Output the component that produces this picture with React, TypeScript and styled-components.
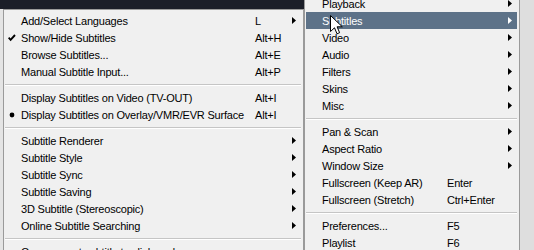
import React from "react";
import styled, { createGlobalStyle } from "styled-components";

const GlobalStyle = createGlobalStyle`
  html, body {
    margin: 0;
    padding: 0;
    background: #dcdcdc;
  }
`;

type Entry =
	| { sep: true }
	| {
			sep?: false;
			label: string;
			shortcut?: string;
			sub?: boolean;
			mark?: "check" | "bullet";
			active?: boolean;
	  };

const subtitleItems: Entry[] = [
	{ label: "Add/Select Languages", shortcut: "L", sub: true },
	{ label: "Show/Hide Subtitles", shortcut: "Alt+H", mark: "check" },
	{ label: "Browse Subtitles...", shortcut: "Alt+E" },
	{ label: "Manual Subtitle Input...", shortcut: "Alt+P" },
	{ sep: true },
	{ label: "Display Subtitles on Video (TV-OUT)", shortcut: "Alt+I" },
	{ label: "Display Subtitles on Overlay/VMR/EVR Surface", shortcut: "Alt+I", mark: "bullet" },
	{ sep: true },
	{ label: "Subtitle Renderer", sub: true },
	{ label: "Subtitle Style", sub: true },
	{ label: "Subtitle Sync", sub: true },
	{ label: "Subtitle Saving", sub: true },
	{ label: "3D Subtitle (Stereoscopic)", sub: true },
	{ label: "Online Subtitle Searching", sub: true },
	{ sep: true },
	{ label: "Copy current subtitle to clipboard" },
];

const mainItems: Entry[] = [
	{ label: "Playback", sub: true },
	{ label: "Subtitles", sub: true, active: true },
	{ label: "Video", sub: true },
	{ label: "Audio", sub: true },
	{ label: "Filters", sub: true },
	{ label: "Skins", sub: true },
	{ label: "Misc", sub: true },
	{ sep: true },
	{ label: "Pan & Scan", sub: true },
	{ label: "Aspect Ratio", sub: true },
	{ label: "Window Size", sub: true },
	{ label: "Fullscreen (Keep AR)", shortcut: "Enter" },
	{ label: "Fullscreen (Stretch)", shortcut: "Ctrl+Enter" },
	{ sep: true },
	{ label: "Preferences...", shortcut: "F5" },
	{ label: "Playlist", shortcut: "F6" },
];

const Screen = styled.div`
  position: relative;
  width: 534px;
  height: 250px;
  overflow: hidden;
  display: flex;
  align-items: flex-start;
  background: #dcdcdc;
  font-family: "Liberation Sans", Arial, sans-serif;
  font-size: 11px;
  letter-spacing: -0.2px;
`;

const LeftColumn = styled.div`
  width: 304px;
  flex-shrink: 0;
  display: flex;
  flex-direction: column;
`;

const TitleStrip = styled.div`
  height: 9px;
  background: #1b1e28;
`;

const SubArea = styled.div`
  display: flex;
  padding-left: 3px;
  background: #e4e4e4;
`;

const Backdrop = styled.div`
  flex: 1;
  align-self: stretch;
  background: #dedede;
`;

const MenuBox = styled.div<{ $width: number; $lift: number }>`
  width: ${({ $width }) => $width}px;
  margin-top: ${({ $lift }) => -$lift}px;
  box-sizing: border-box;
  flex-shrink: 0;
  background: #f0f0f0;
  border: 1px solid #9a9a9a;
  padding: 2px 2px 3px 1px;
  display: flex;
  flex-direction: column;
  box-shadow: 2px 2px 2px rgba(0, 0, 0, 0.22);
`;

const Row = styled.div<{ $active?: boolean }>`
  height: 17px;
  display: flex;
  align-items: center;
  color: ${({ $active }) => ($active ? "#ffffff" : "#000000")};
  background: ${({ $active }) => ($active ? "#5d7288" : "transparent")};
  white-space: nowrap;
`;

const MarkCol = styled.div`
  width: 16px;
  flex-shrink: 0;
  display: flex;
  align-items: center;
  padding-left: 3px;
  box-sizing: border-box;
`;

const Label = styled.span<{ $width: number }>`
  width: ${({ $width }) => $width}px;
  flex-shrink: 0;
`;

const Shortcut = styled.span`
  flex: 1;
`;

const Arrow = styled.svg`
  width: 4px;
  height: 7px;
  margin-right: 5px;
  flex-shrink: 0;
`;

const Separator = styled.div`
  height: 9px;
  display: flex;
  flex-direction: column;
  justify-content: center;

  &::before {
    content: "";
    height: 1px;
    background: #c5c5c5;
  }
  &::after {
    content: "";
    height: 1px;
    background: #ffffff;
  }
`;

const Cursor = styled.svg`
  position: absolute;
  left: 330px;
  top: 15px;
  width: 13px;
  height: 20px;
`;

function Mark({ kind }: { kind?: "check" | "bullet" }) {
	if (kind === "check") {
		return (
			<svg width="8" height="8" viewBox="0 0 8 8">
				<path d="M0.6 3.6 L2.6 5.8 L7 1" fill="none" stroke="#000" strokeWidth="1.9" />
			</svg>
		);
	}
	if (kind === "bullet") {
		return (
			<svg width="6" height="6" viewBox="0 0 6 6" style={{ marginLeft: 1 }}>
				<circle cx="3" cy="3" r="2.4" fill="#000" />
			</svg>
		);
	}
	return null;
}

function Menu({ items, width, lift, labelWidth }: { items: Entry[]; width: number; lift: number; labelWidth: number }) {
	return (
		<MenuBox $width={width} $lift={lift}>
			{items.map((it, i) =>
				it.sep ? (
					<Separator key={i} />
				) : (
					<Row key={i} $active={it.active}>
						<MarkCol>
							<Mark kind={it.mark} />
						</MarkCol>
						<Label $width={labelWidth}>{it.label}</Label>
						<Shortcut>{it.shortcut}</Shortcut>
						{it.sub && (
							<Arrow viewBox="0 0 4 7">
								<polygon points="0,0 4,3.5 0,7" fill={it.active ? "#ffffff" : "#000000"} />
							</Arrow>
						)}
					</Row>
				)
			)}
		</MenuBox>
	);
}

export default function App() {
	return (
		<>
			<GlobalStyle />
			<Screen>
				<LeftColumn>
					<TitleStrip />
					<SubArea>
						<Menu items={subtitleItems} width={301} lift={0} labelWidth={234} />
					</SubArea>
				</LeftColumn>
				<Menu items={mainItems} width={216} lift={8} labelWidth={125} />
				<Backdrop />
				<Cursor viewBox="0 0 13 20">
					<path
						d="M0.5 0.5 L0.5 16.5 L4.5 12.8 L7 18.8 L9.6 17.7 L7.1 11.8 L12.3 11.8 Z"
						fill="#ffffff"
						stroke="#000000"
						strokeWidth="1"
						strokeLinejoin="miter"
					/>
				</Cursor>
			</Screen>
		</>
	);
}
